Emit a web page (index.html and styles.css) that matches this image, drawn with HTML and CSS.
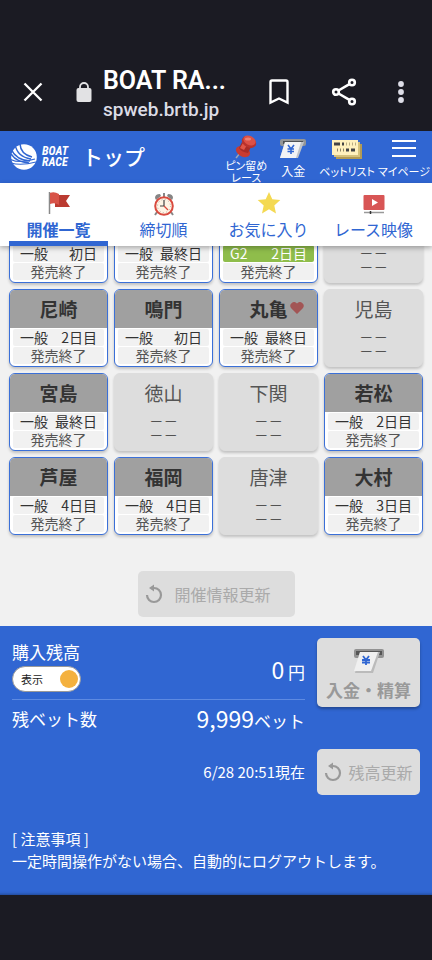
FILE: index.html
```html
<!DOCTYPE html>
<html lang="ja">
<head>
<meta charset="utf-8">
<meta name="viewport" content="width=device-width, initial-scale=1">
<title>BOAT RACE トップ</title>
<link rel="stylesheet" href="styles.css">
</head>
<body>
<div class="browser-bar">
  <button class="icon-button close" aria-label="閉じる"><svg width="20" height="20" viewBox="0 0 20 20"><path d="M1.5 1.5l17 17M18.500 1.500l-17 17" fill="none" stroke="#fff" stroke-width="2.300"/></svg></button>
  <svg class="lock" width="16" height="20" viewBox="0 0 16 20"><path d="M4 8V5a4 4 0 0 1 8 0v3" fill="none" stroke="#e2e2e4" stroke-width="1.800"/><rect x="0.500" y="6" width="15" height="14" rx="2" fill="#e2e2e4"/></svg>
  <div class="address">
    <div class="page-title">BOAT RA...</div>
    <div class="host">spweb.brtb.jp</div>
  </div>
  <button class="icon-button" aria-label="ブックマーク"><svg width="20" height="26" viewBox="0 0 20 26"><path d="M1.500 23.500V3Q1.500 1.500 3 1.500H17Q18.500 1.500 18.500 3V23.500L10 19.500Z" fill="none" stroke="#fff" stroke-width="2.400"/></svg></button>
  <button class="icon-button share" aria-label="共有"><svg width="26" height="28" viewBox="0 0 26 28"><g fill="none" stroke="#fff" stroke-width="2.600"><path d="M7.500 12.500L18 6.300M7.500 15.500L18 21.700"/><circle cx="5" cy="14" r="2.800"/><circle cx="21" cy="4.500" r="2.800"/><circle cx="21" cy="23.500" r="2.800"/></g></svg></button>
  <button class="icon-button more" aria-label="メニュー"><svg width="6" height="24" viewBox="0 0 6 24" fill="#dedee8"><circle cx="3" cy="4" r="2.900"/><circle cx="3" cy="12" r="2.900"/><circle cx="3" cy="20" r="2.900"/></svg></button>
</div>

<header class="site-header">
  <a class="logo" href="#">
    <svg width="26" height="26" viewBox="0 0 26 26"><circle cx="13" cy="13" r="12.800" fill="#fff"/><g fill="none" stroke="#3066d2"><path d="M0 5Q5 16 19 17M4 0Q6 13 20 15M9-1Q9 10 21 13M0 10Q5 18 18 19" stroke-width="1.500"/><path d="M-1 15Q7 20 24 15M0 19Q10 22 25 18" stroke-width="1.100"/></g></svg>
    <span class="logo-text">BOAT<br>RACE</span>
  </a>
  <h1>トップ</h1>
  <nav class="actions">
    <a class="pin" href="#">
      <svg width="22" height="24" viewBox="0 0 22 24"><path d="M5 18L1 23" stroke="#9da4b5" stroke-width="1.500"/><ellipse cx="8" cy="16.500" rx="7.500" ry="5" transform="rotate(28 8 16.500)" fill="#c83b31"/><path d="M7 7L16 12L13 18Q6 17 4 13Z" fill="#a82c27"/><path d="M8 8L12 10L9 15L5 13Z" fill="#df5547"/><ellipse cx="14" cy="7" rx="7.500" ry="5.500" transform="rotate(28 14 7)" fill="#b9322c"/><ellipse cx="14.500" cy="5.500" rx="6.500" ry="4.500" transform="rotate(28 14.500 5.500)" fill="#dc5146"/><ellipse cx="13" cy="4" rx="3" ry="1.500" fill="#ec8073"/></svg>
      <span>ピン留め<br>レース</span>
    </a>
    <a class="pay" href="#">
      <svg width="28" height="24" viewBox="0 0 28 24"><rect x="1" y="2" width="26" height="7" rx="2" fill="#929598"/><rect x="4" y="4" width="20" height="3" fill="#4d5155"/><path d="M6 5H25L19 21H1Z" fill="#bfc3c8"/><path d="M6 5H22L17 21H1Z" fill="#f2f3f5"/><path d="M9 8L12 12L15 8M12 12V17M8.500 12H15M8.500 14.500H15" fill="none" stroke="#3066d2" stroke-width="1.600"/></svg>
      <span>入金</span>
    </a>
    <a class="kana" href="#">
      <svg width="32" height="24" viewBox="0 0 32 24"><rect x="5" y="7" width="26" height="15" fill="#b29b55"/><rect x="3" y="5" width="26" height="15" fill="#d5c27d"/><rect x="1" y="3" width="26" height="15" fill="#fff1bd"/><path d="M3 7H9M11 7H13" stroke="#444" stroke-width="3"/><path d="M15 7H16M18 7H19M21 7H22M24 7H25" stroke="#b9ad83" stroke-width="3"/><path d="M6 13H7M9 13H10M12 13H13" stroke="#8d8466" stroke-width="3"/><path d="M15 13H18M20 13H24" stroke="#444" stroke-width="3"/></svg>
      <span>ベットリスト</span>
    </a>
    <a class="kana" href="#">
      <svg width="26" height="24" viewBox="0 0 26 24"><path d="M1 4H25M1 11H25M1 19H25" stroke="#fff" stroke-width="2"/></svg>
      <span>マイページ</span>
    </a>
  </nav>
</header>

<nav class="tabs">
  <a class="tab active" href="#">
    <svg width="24" height="26" viewBox="0 0 24 26"><path d="M2.500 2V24" stroke="#898989" stroke-width="1.500"/><path d="M8 5H23L19 11L23 17H8Z" fill="#bb3b31"/><path d="M3 3Q7 1 12 4V15Q8 12 3 14Z" fill="#d85348"/></svg>
    開催一覧
  </a>
  <a class="tab" href="#">
    <svg width="24" height="26" viewBox="0 0 24 26"><path d="M5 22L3 25M19 22L21 25" stroke="#888" stroke-width="2"/><path d="M3 8Q3 4 8 4L9 6L4 10ZM21 8Q21 4 16 4L15 6L20 10Z" fill="#858585"/><path d="M12 3V7" stroke="#888" stroke-width="2"/><circle cx="12" cy="16" r="8.800" fill="#fff4e5" stroke="#d94b3f" stroke-width="2"/><circle cx="12" cy="16" r="6.500" fill="none" stroke="#b6aba0" stroke-dasharray="1 2.400"/><path d="M12 10V16H8" fill="none" stroke="#444" stroke-width="1.200"/><path d="M12 16L16 20" stroke="#d94b3f" stroke-width="1.200"/></svg>
    締切順
  </a>
  <a class="tab" href="#">
    <svg width="24" height="26" viewBox="0 0 24 26"><path d="M12 2L15.300 9.300L23.300 10L17.300 15.400L19 23.500L12 19.200L5 23.500L6.700 15.400L0.700 10L8.700 9.300Z" fill="#f4d952"/></svg>
    お気に入り
  </a>
  <a class="tab" href="#">
    <svg width="24" height="26" viewBox="0 0 24 26"><rect x="1.500" y="5" width="21" height="15" rx="1" fill="#d85555"/><path d="M10 9L16 12.500L10 16Z" fill="#fff"/><path d="M2 22.500H22" stroke="#999" stroke-width="1.500"/><path d="M8.500 21V24" stroke="#333" stroke-width="1.500"/></svg>
    レース映像
  </a>
</nav>

<main class="venues">
  <div class="grid">
    <a class="card" href="#"><div class="name"></div><div class="grade"><span>一般</span><span>初日</span></div><div class="status">発売終了</div></a>
    <a class="card" href="#"><div class="name"></div><div class="grade"><span>一般</span><span>最終日</span></div><div class="status">発売終了</div></a>
    <a class="card" href="#"><div class="name"></div><div class="grade g2"><span>G2</span><span>2日目</span></div><div class="status">発売終了</div></a>
    <div class="card closed"><div class="name"></div><div class="dash">— —</div><div class="dash">— —</div></div>

    <a class="card" href="#"><div class="name">尼崎</div><div class="grade"><span>一般</span><span>2日目</span></div><div class="status">発売終了</div></a>
    <a class="card" href="#"><div class="name">鳴門</div><div class="grade"><span>一般</span><span>初日</span></div><div class="status">発売終了</div></a>
    <a class="card" href="#"><div class="name">丸亀<svg class="heart" width="14" height="12" viewBox="0 0 14 12"><path d="M7 12L1.200 6.200A3.500 3.500 0 0 1 7 1.600A3.500 3.500 0 0 1 12.800 6.200Z" fill="#a25555"/></svg></div><div class="grade"><span>一般</span><span>最終日</span></div><div class="status">発売終了</div></a>
    <div class="card closed"><div class="name">児島</div><div class="dash">— —</div><div class="dash">— —</div></div>

    <a class="card" href="#"><div class="name">宮島</div><div class="grade"><span>一般</span><span>最終日</span></div><div class="status">発売終了</div></a>
    <div class="card closed"><div class="name">徳山</div><div class="dash">— —</div><div class="dash">— —</div></div>
    <div class="card closed"><div class="name">下関</div><div class="dash">— —</div><div class="dash">— —</div></div>
    <a class="card" href="#"><div class="name">若松</div><div class="grade"><span>一般</span><span>2日目</span></div><div class="status">発売終了</div></a>

    <a class="card" href="#"><div class="name">芦屋</div><div class="grade"><span>一般</span><span>4日目</span></div><div class="status">発売終了</div></a>
    <a class="card" href="#"><div class="name">福岡</div><div class="grade"><span>一般</span><span>4日目</span></div><div class="status">発売終了</div></a>
    <div class="card closed"><div class="name">唐津</div><div class="dash">— —</div><div class="dash">— —</div></div>
    <a class="card" href="#"><div class="name">大村</div><div class="grade"><span>一般</span><span>3日目</span></div><div class="status">発売終了</div></a>
  </div>
  <button class="refresh wide" disabled><svg width="18" height="20" viewBox="0 0 18 20"><path d="M8 4H9A7 7 0 1 1 2 11" fill="none" stroke="#999" stroke-width="2.200"/><path d="M4 4L9 0.500V7.500Z" fill="#999"/></svg>開催情報更新</button>
</main>

<section class="account">
  <div class="columns">
    <div class="figures">
      <div class="balance">
        <div>
          <div class="label">購入残高</div>
          <label class="switch">表示<input type="checkbox" checked></label>
        </div>
        <div class="amount"><strong>0</strong> 円</div>
      </div>
      <div class="bets">
        <div class="label">残ベット数</div>
        <div class="amount"><strong>9,999</strong>ベット</div>
      </div>
      <div class="time">6/28 20:51現在</div>
    </div>
    <div class="controls">
      <button class="deposit" disabled><svg width="32" height="25" viewBox="0 0 32 25"><rect x="1" y="1" width="30" height="9" rx="2" fill="#929292"/><rect x="3" y="3" width="26" height="4" fill="#555"/><path d="M7 4H27L20 25H2Z" fill="#bbb"/><path d="M7 4H25L18 23H1Z" fill="#f0f0f0"/><path d="M10 8L13 12L16 8M13 12V17M9 12H17M9 14.500H17" fill="none" stroke="#3066d2" stroke-width="1.800"/></svg>入金・精算</button>
      <button class="refresh" disabled><svg width="18" height="20" viewBox="0 0 18 20"><path d="M8 4H9A7 7 0 1 1 2 11" fill="none" stroke="#999" stroke-width="2.200"/><path d="M4 4L9 0.500V7.500Z" fill="#999"/></svg>残高更新</button>
    </div>
  </div>
  <p class="notes">[ 注意事項 ]<br>一定時間操作がない場合、自動的にログアウトします。</p>
</section>
</body>
</html>
```
FILE: styles.css
```css
* { box-sizing: border-box; }

body {
  margin: 0;
  min-height: 100vh;
  background: #1b1b23;
  color: #333;
  font-family: "Noto Sans CJK JP", sans-serif;
  font-size: 14px;
}

a { color: inherit; text-decoration: none; }

button { margin: 0; padding: 0; border: 0; background: none; font: inherit; }

svg { display: block; flex: none; }

/* Browser toolbar */
.browser-bar {
  display: flex;
  align-items: center;
  height: 131px;
  padding: 53px 28px 0 23px;
  font-family: Roboto, sans-serif;
}

.lock { margin: 0 11px 0 33px; }
.address { flex: 1; min-width: 0; white-space: nowrap; padding-top: 6px; }
.page-title { color: #fff; font-size: 25px; font-weight: 600; line-height: 30px; }
.host { color: #dcdce6; font-size: 19px; font-weight: 500; line-height: 28px; }
.share { margin-left: 42px; }
.more { margin-left: 41px; }

/* Site header */
.site-header {
  display: flex;
  align-items: center;
  height: 52px;
  padding: 0 2px 0 11px;
  background: #3066d2;
  color: #fff;
}

.logo { display: flex; align-items: center; gap: 5px; }
.logo-text {
  font: italic 700 12px/11px "Liberation Sans Narrow", "Roboto Condensed", "Liberation Sans", sans-serif;
}

h1 {
  flex: 1;
  margin: 0 0 0 14px;
  padding-bottom: 3px;
  font-size: 21px;
  font-weight: 500;
  line-height: 28px;
  white-space: nowrap;
}

.actions {
  display: flex;
  align-self: stretch;
  gap: 3px;
  font-size: 12px;
  line-height: 12px;
  text-align: center;
  white-space: nowrap;
  font-feature-settings: "palt";
}
.actions a { display: flex; flex-direction: column; align-items: center; padding-top: 6px; gap: 4px; }
.actions .pay { width: 46px; }
.actions .kana { font-size: 11px; }
.actions .pin { padding-top: 4px; gap: 0; font-size: 11px; }

/* Tabs */
.tabs {
  position: relative;
  z-index: 1;
  display: grid;
  grid-template-columns: repeat(4, 1fr);
  gap: 6px;
  height: 63px;
  padding: 0 9px;
  background: #fff;
  color: #3066d2;
  font-size: 16px;
  line-height: 20px;
  box-shadow: 0 2px 5px rgba(0, 0, 0, .3);
}
.tab {
  display: flex;
  flex-direction: column;
  align-items: center;
  gap: 3px;
  padding-top: 7px;
  white-space: nowrap;
  border-bottom: 5px solid transparent;
}
.tab.active { border-color: #3066d2; font-weight: 700; }

/* Venue cards, scrolled partly beneath the tabs */
.venues { margin-top: -41px; padding: 0 9px 9px; background: #f1f1f1; }

.grid { display: grid; grid-template-columns: repeat(4, 1fr); gap: 6px; }

.card {
  height: 78px;
  overflow: hidden;
  border: 1px solid #3b70d8;
  border-radius: 6px;
  background: #fff;
  box-shadow: 0 2px 3px rgba(0, 0, 0, .2);
  line-height: 17px;
}
.name {
  display: flex;
  align-items: center;
  justify-content: center;
  position: relative;
  height: 38px;
  margin-bottom: 1px;
  padding-bottom: 2px;
  background: #a0a0a0;
  font-size: 19px;
  font-weight: 700;
}
.heart { position: absolute; right: 13px; }
.grade, .status { height: 17px; margin: 0 3px 1px; border-radius: 2px; background: #f1f1f1; }
.grade { display: flex; justify-content: space-between; padding: 0 7px; }
.g2 { background: #8fbd4b; color: #fff; }
.status { text-align: center; color: #555; }
.closed { border-color: #ddd; background: #ddd; text-align: center; }
.closed .name { background: none; color: #555; font-weight: 400; }
.dash { font-size: 13px; line-height: 14px; }

.refresh {
  display: flex;
  align-items: center;
  justify-content: center;
  gap: 6px;
  height: 46px;
  border-radius: 5px;
  background: #ddd;
  color: #aaa;
  font-size: 16px;
  white-space: nowrap;
}
.refresh.wide { width: 157px; margin: 36px auto 0; gap: 11px; padding-right: 16px; }

/* Account panel */
.account {
  padding: 12px 12px 23px;
  background: #3066d2;
  color: #fff;
  box-shadow: inset 0 -4px 3px -3px rgba(0, 0, 0, .3);
}
.columns { display: grid; grid-template-columns: 1fr 103px; gap: 12px; }
.label { font-size: 17px; line-height: 28px; }

.balance, .bets { display: flex; align-items: center; justify-content: space-between; }
.balance { height: 62px; padding-bottom: 8px; border-bottom: 1px solid #5d8ae2; }
.bets { height: 38px; }
.amount { font-size: 17px; line-height: 32px; }
.amount strong { font-size: 23px; font-weight: 400; }
.balance .amount { padding-top: 12px; }

.switch {
  display: flex;
  align-items: center;
  justify-content: space-between;
  width: 69px;
  height: 26px;
  padding: 0 2px 0 8px;
  border: 1px solid #999;
  border-radius: 13px;
  background: #fff;
  color: #222;
  font-size: 11px;
}
.switch input { appearance: none; width: 18px; height: 18px; margin: 0; border-radius: 50%; background: #f4b13e; }

.time { margin-top: 11px; font-size: 15px; line-height: 46px; text-align: right; }

.controls { display: flex; flex-direction: column; justify-content: space-between; }
.deposit {
  display: flex;
  flex-direction: column;
  align-items: center;
  gap: 4px;
  height: 69px;
  padding-top: 10px;
  border-radius: 5px;
  background: #ddd;
  color: #999;
  font-size: 17px;
  font-weight: 700;
  line-height: 26px;
  white-space: nowrap;
  box-shadow: 0 2px 3px rgba(0, 0, 0, .3);
}

.notes { margin: 33px 0 0; font-size: 15px; line-height: 22px; }
```
